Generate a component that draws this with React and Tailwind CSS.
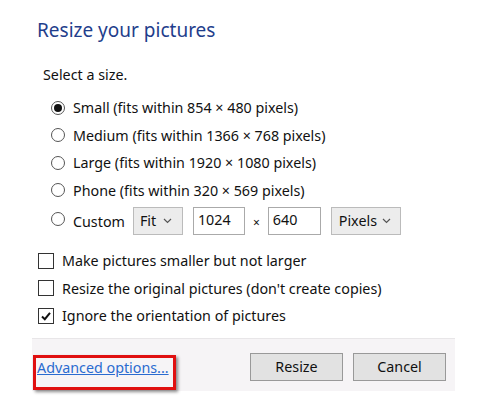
import React from "react";

const font = { fontFamily: '"Noto Sans", "Open Sans", sans-serif' };

function Radio({ checked, label }) {
  return (
    <div className="flex items-center h-[27.5px]">
      <span className="w-[14px] h-[14px] rounded-full border border-[#555] bg-white flex items-center justify-center ml-[51px] mr-[8px]">
        {checked && <span className="w-[8px] h-[8px] rounded-full bg-[#111]" />}
      </span>
      <span>{label}</span>
    </div>
  );
}

function Check({ checked, label }) {
  return (
    <div className="flex items-center h-[27.5px]">
      <span className="w-[16px] h-[16px] border border-[#333] bg-white flex items-center justify-center ml-[38px] mr-[8px]">
        {checked && (
          <svg width="12" height="12" viewBox="0 0 12 12">
            <path d="M2 6.5 L4.8 9.2 L10 2.8" fill="none" stroke="#111" strokeWidth="2" />
          </svg>
        )}
      </span>
      <span>{label}</span>
    </div>
  );
}

function Chevron() {
  return (
    <svg width="9" height="6" viewBox="0 0 9 6">
      <path d="M1 1 L4.5 4.5 L8 1" fill="none" stroke="#555" strokeWidth="1.2" />
    </svg>
  );
}

export default function App() {
  return (
    <div className="w-[492px] h-[409px] bg-white text-[#111] text-[14.3px] relative" style={font}>
      <div className="pt-[15px] pl-[37px] text-[19px] text-[#1f3e8c] leading-[30px]">Resize your pictures</div>
      <div className="mt-[19px] pl-[43px] leading-[22px]">Select a size.</div>
      <div className="mt-[8px] flex flex-col">
        <Radio checked label="Small (fits within 854 × 480 pixels)" />
        <Radio label="Medium (fits within 1366 × 768 pixels)" />
        <Radio label="Large (fits within 1920 × 1080 pixels)" />
        <Radio label="Phone (fits within 320 × 569 pixels)" />
        <div className="flex items-center h-[33px]">
          <span className="w-[14px] h-[14px] rounded-full border border-[#555] bg-white ml-[51px] mr-[8px] -mt-[4px]" />
          <span className="mt-[3px]">Custom</span>
          <div className="ml-[8px] w-[50px] h-[28px] border border-[#bbb] bg-[#ececec] flex items-center justify-between pl-[6px] pr-[10px]">
            <span>Fit</span>
            <Chevron />
          </div>
          <div className="ml-[10px] w-[52px] h-[28px] border border-[#aaa] bg-white pl-[4px] leading-[24px]">1024</div>
          <span className="mx-[8px] text-[12px] mt-[4px]">×</span>
          <div className="w-[53px] h-[28px] border border-[#aaa] bg-white pl-[4px] leading-[24px]">640</div>
          <div className="ml-[10px] w-[70px] h-[28px] border border-[#bbb] bg-[#ececec] flex items-center justify-between pl-[7px] pr-[9px]">
            <span>Pixels</span>
            <Chevron />
          </div>
        </div>
      </div>
      <div className="mt-[10px] flex flex-col">
        <Check label="Make pictures smaller but not larger" />
        <Check label="Resize the original pictures (don't create copies)" />
        <Check checked label="Ignore the orientation of pictures" />
      </div>
      <div className="mt-[8px] ml-[32px] w-[423px] h-[53px] bg-[#f6f4f6] border-t border-[#e8e6e8] flex items-center relative">
        <div className="absolute left-[1px] top-[16px] w-[143px] h-[35px] border-[3px] border-[#e01010] shadow-[2px_2px_3px_rgba(0,0,0,0.45)]" />
        <a className="ml-[5px] mt-[7px] text-[#2a6bd0] underline">Advanced options...</a>
        <div className="ml-auto flex gap-[10px] mr-[9px] mt-[5px]">
          <div className="w-[93px] h-[28px] border border-[#999] bg-[#e2e2e2] flex items-center justify-center">Resize</div>
          <div className="w-[93px] h-[28px] border border-[#999] bg-[#e2e2e2] flex items-center justify-center">Cancel</div>
        </div>
      </div>
    </div>
  );
}
